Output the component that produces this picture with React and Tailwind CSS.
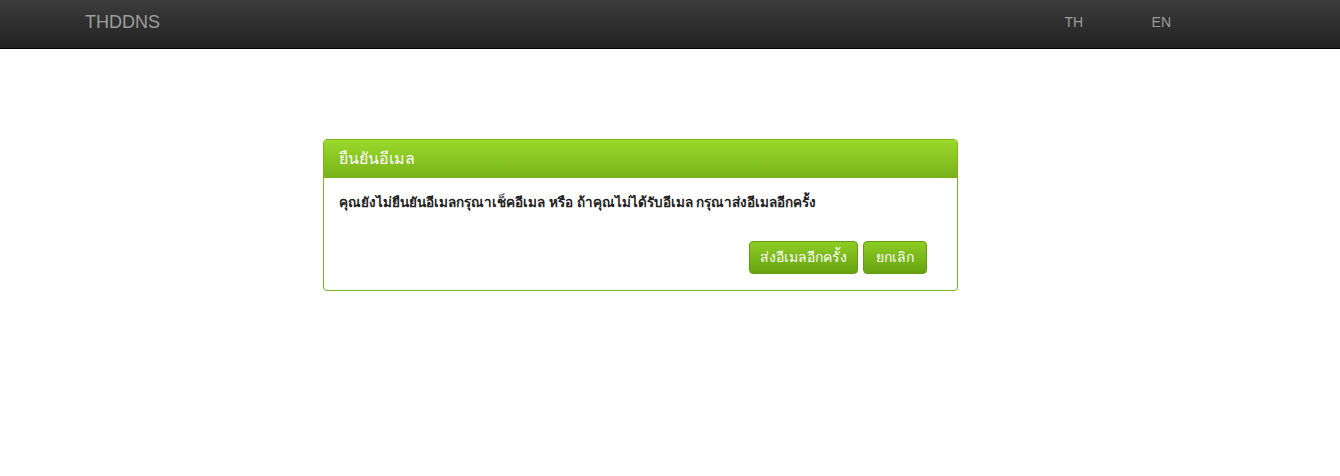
export default function App() {
  return (
    <div className="min-h-[476px] bg-white" style={{ fontFamily: '"Liberation Sans", "Noto Sans", sans-serif' }}>
      <nav className="h-[49px] border-b border-black bg-gradient-to-b from-[#3c3c3c] to-[#222222]">
        <div className="flex h-[48px] items-center pb-[4px] pl-[85px]">
          <span className="text-[18px] text-[#9d9d9d]">THDDNS</span>
          <div className="ml-auto flex items-center pr-[169px] text-[14px] text-[#9d9d9d]">
            <span className="w-[88px] pl-[1px]">TH</span>
            <span>EN</span>
          </div>
        </div>
      </nav>
      <div className="pl-[323px] pt-[90px]">
        <div className="w-[635px] overflow-hidden rounded-[4px] border border-[#7ab51d]">
          <div className="flex h-[38px] items-center bg-gradient-to-b from-[#9bd92a] to-[#78b21c] px-[15px] text-[16px] text-white">
            ยืนยันอีเมล
          </div>
          <div className="px-[15px] pt-[15px] pb-[16px]">
            <p className="text-[13.5px] font-bold text-[#222]">
              คุณยังไม่ยืนยันอีเมลกรุณาเช็คอีเมล หรือ ถ้าคุณไม่ได้รับอีเมล กรุณาส่งอีเมลอีกครั้ง
            </p>
            <div className="mt-[28px] flex justify-end gap-[5px] pr-[15px]">
              <button className="h-[33px] rounded-[4px] border border-[#649c12] bg-gradient-to-b from-[#8ccd24] to-[#68a30f] px-[10px] text-[14px] text-white">
                ส่งอีเมลอีกครั้ง
              </button>
              <button className="h-[33px] rounded-[4px] border border-[#649c12] bg-gradient-to-b from-[#8ccd24] to-[#68a30f] px-[12px] text-[14px] text-white">
                ยกเลิก
              </button>
            </div>
          </div>
        </div>
      </div>
    </div>
  );
}
